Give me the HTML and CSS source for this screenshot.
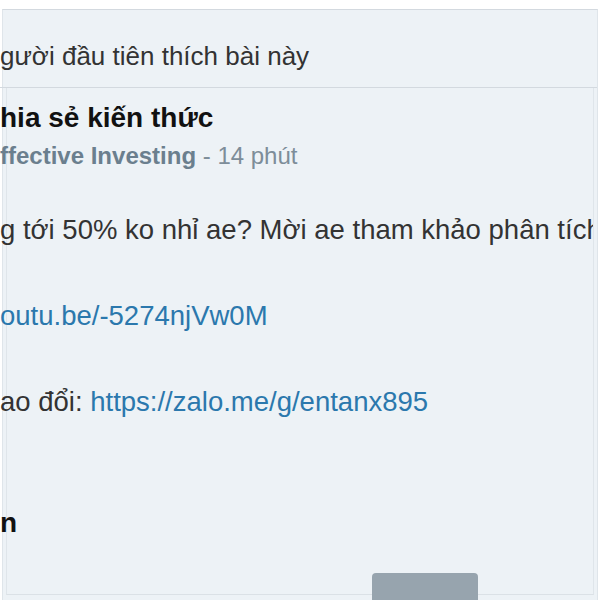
FILE: index.html
```html
<!DOCTYPE html>
<html lang="vi">
<head>
  <meta charset="UTF-8">
  <meta name="viewport" content="width=device-width, initial-scale=1">
  <title>Bài viết</title>
  <link rel="stylesheet" href="styles.css">
</head>
<body>
  <div class="page">
    <div class="panel">
      <!-- Dòng lượt thích -->
      <div class="likes">gười đầu tiên thích bài này</div>

      <div class="post">
        <div class="post-body">
          <h3 class="post-title">hia sẻ kiến thức</h3>
          <div class="post-meta">
            <span class="author">ffective Investing</span> - 14 phút
          </div>

          <p class="post-text">g tới 50% ko nhỉ ae? Mời ae tham khảo phân tích</p>
          <p class="post-text"><a href="#">outu.be/-5274njVw0M</a></p>
          <p class="post-text">ao đổi: <a href="#">https://zalo.me/g/entanx895</a></p>

          <div class="post-section">n</div>
        </div>
      </div>

      <div class="post-footer">
        <button class="btn-more"></button>
      </div>
    </div>
  </div>
</body>
</html>
```

FILE: styles.css
```css
* {
  margin: 0;
  padding: 0;
  box-sizing: border-box;
}

body {
  font-family: 'Liberation Sans', Arial, sans-serif;
  background: #fff;
  color: #333;
  height: 600px;
  overflow: hidden;
}

.page {
  padding-top: 9px;
  height: 600px;
  overflow: hidden;
}

.panel {
  margin: 0 2px;
  background: #edf2f6;
  border-top: 1px solid #d3d9df;
  border-left: 1px solid #dfe5ea;
  border-right: 1px solid #dfe5ea;
  height: 700px;
}

.likes {
  padding-top: 30px;
  height: 78px;
  margin-left: -3px;
  font-size: 26px;
  line-height: 32px;
  color: #333;
  border-bottom: 1px solid #d3d9df;
  white-space: nowrap;
}

.post {
  margin: 0 3px;
  border-left: 1px solid #dfe5ea;
  border-right: 1px solid #dfe5ea;
  border-bottom: 1px solid #dbe1e6;
}

.post-body {
  margin-left: -7px;
  padding: 14px 0 55px;
  white-space: nowrap;
  overflow: hidden;
}

.post-title {
  font-size: 28px;
  line-height: 32px;
  font-weight: 700;
  color: #111;
}

.post-meta {
  margin-top: 7px;
  font-size: 24px;
  line-height: 30px;
  color: #7d8d99;
}

.author {
  font-weight: 700;
  color: #6b7f8e;
}

.post-text {
  margin-top: 43px;
  font-size: 27.5px;
  line-height: 32px;
  color: #333;
}

.post-text + .post-text {
  margin-top: 54px;
}

.post-text a {
  color: #2b78ad;
  text-decoration: none;
}

.post-section {
  margin-top: 89px;
  font-size: 28px;
  line-height: 32px;
  font-weight: 700;
  color: #111;
}

.post-footer {
  margin-top: -22px;
  padding-left: 369px;
}

.btn-more {
  width: 106px;
  height: 40px;
  border: none;
  border-radius: 4px;
  background: #97a4ae;
}
```
